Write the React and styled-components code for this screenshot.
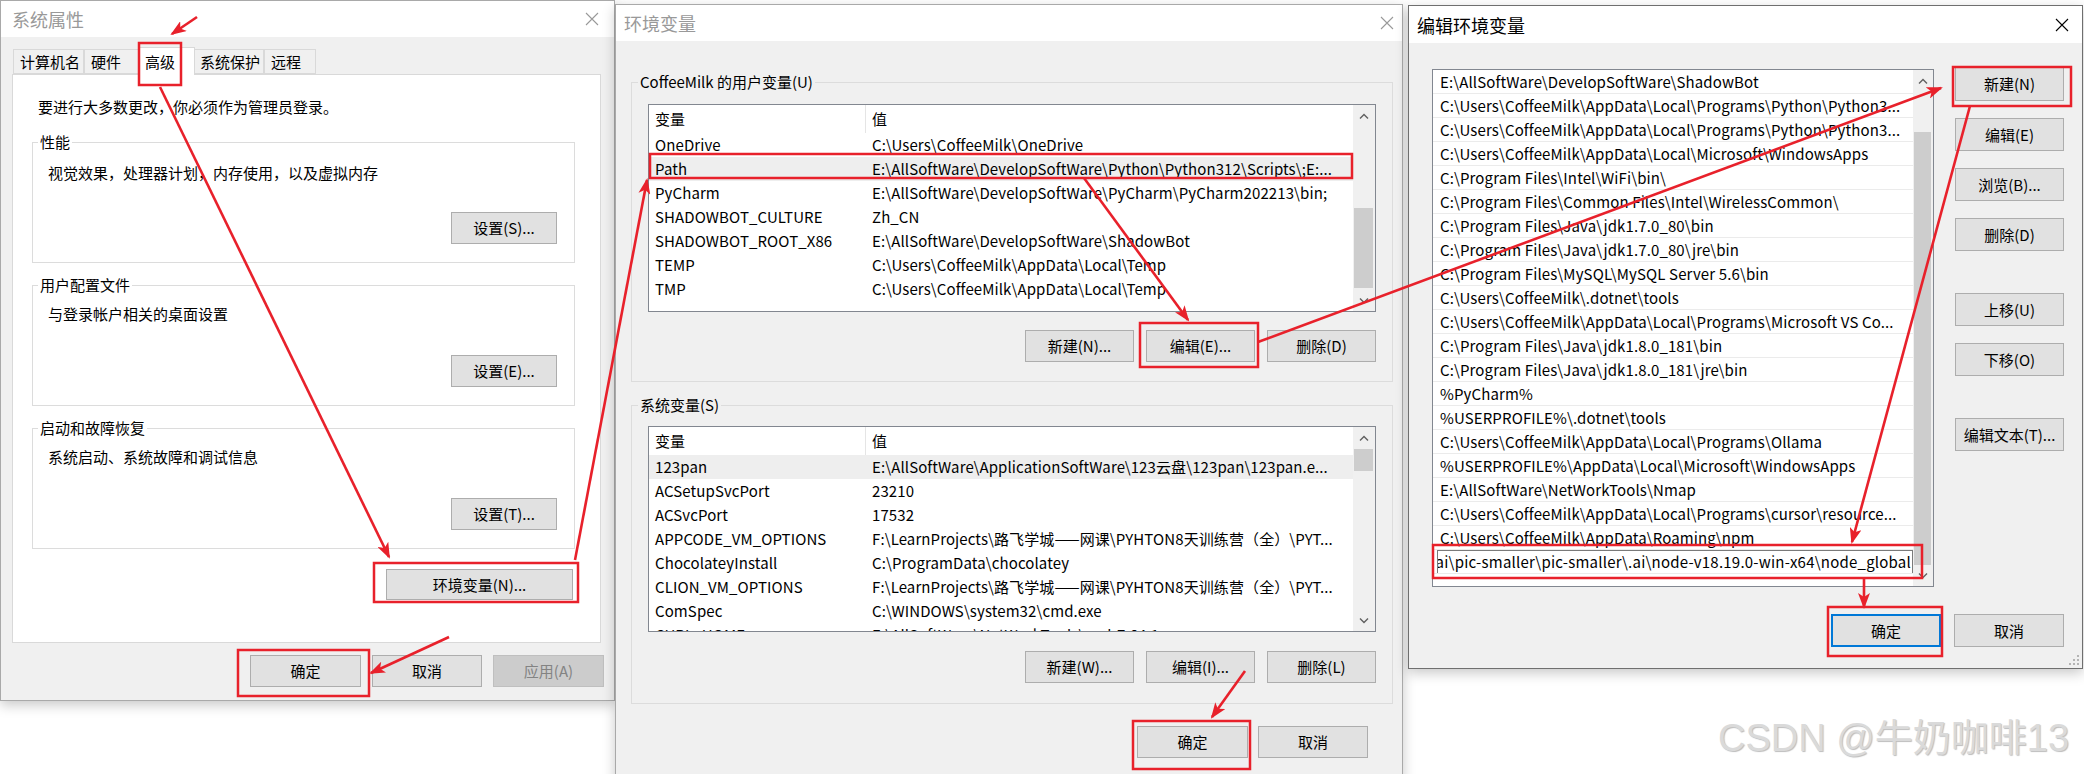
import React from "react";
import styled, { createGlobalStyle } from "styled-components";

const FONT = `"Noto Sans CJK SC", "Microsoft YaHei", sans-serif`;
const RED = "#e8212b";

const GlobalStyle = createGlobalStyle`
  html, body {
    margin: 0;
    padding: 0;
    background: #ffffff;
  }
  body {
    font-family: ${FONT};
    font-size: 15px;
    color: #000;
  }
  * {
    box-sizing: border-box;
  }
`;

const Stage = styled.div`
  position: relative;
  width: 2084px;
  height: 774px;
  overflow: hidden;
  display: flex;
  align-items: flex-start;
  background: #fff;
`;

const Dialog = styled.section`
  position: relative;
  flex: none;
  display: flex;
  flex-direction: column;
  width: ${(p) => p.$w}px;
  height: ${(p) => p.$h}px;
  margin-top: ${(p) => p.$top || 0}px;
  margin-left: ${(p) => p.$left || 0}px;
  background: #f0f0f0;
  border: 1px solid ${(p) => (p.$active ? "#6f6f6f" : "#a9a9a9")};
  box-shadow: 0 4px 12px rgba(0, 0, 0, 0.22);
`;

const TitleBar = styled.header`
  flex: none;
  height: ${(p) => p.$h}px;
  display: flex;
  align-items: center;
  justify-content: space-between;
  padding-left: ${(p) => p.$pl}px;
  background: #fff;
  color: ${(p) => (p.$active ? "#000" : "#999")};
  font-size: 18px;
  line-height: 24px;
`;

const CloseBox = styled.span`
  width: ${(p) => p.$w}px;
  height: 100%;
  display: flex;
  align-items: center;
  justify-content: center;
`;

const Body = styled.div`
  flex: 1;
  display: flex;
  flex-direction: column;
  align-items: ${(p) => p.$align || "stretch"};
  padding: ${(p) => p.$pad};
  min-height: 0;
`;

const Button = styled.div`
  flex: none;
  width: ${(p) => p.$w}px;
  height: ${(p) => p.$h || 32}px;
  margin-top: ${(p) => p.$mt || 0}px;
  display: flex;
  align-items: center;
  justify-content: center;
  background: ${(p) => (p.$disabled ? "#cccccc" : "#e1e1e1")};
  border: ${(p) => (p.$default ? "2px solid #0078d7" : p.$disabled ? "1px solid #bfbfbf" : "1px solid #adadad")};
  color: ${(p) => (p.$disabled ? "#838383" : "#000")};
  font-size: 15px;
  line-height: 20px;
  white-space: nowrap;
`;

const ButtonRow = styled.div`
  flex: none;
  display: flex;
  justify-content: flex-end;
  gap: ${(p) => p.$gap}px;
  margin-top: ${(p) => p.$mt || 0}px;
  margin-right: ${(p) => p.$mr || 0}px;
  align-self: stretch;
`;

/* ---------- dialog 1: 系统属性 ---------- */

const TabStrip = styled.div`
  flex: none;
  display: flex;
  align-items: flex-end;
  height: 27px;
  padding-left: 1px;
  position: relative;
  z-index: 1;
`;

const Tab = styled.div`
  flex: none;
  width: ${(p) => p.$w}px;
  height: ${(p) => (p.$sel ? 28 : 25)}px;
  margin: ${(p) => (p.$sel ? "0 -2px -1px" : "0")};
  padding-left: 6px;
  display: flex;
  align-items: center;
  background: ${(p) => (p.$sel ? "#fff" : "#f0f0f0")};
  border: 1px solid #d9d9d9;
  border-bottom: ${(p) => (p.$sel ? "none" : "1px solid #d9d9d9")};
  position: relative;
  z-index: ${(p) => (p.$sel ? 2 : 1)};
  font-size: 15px;
  line-height: 20px;
`;

const TabPanel = styled.div`
  flex: none;
  width: 589px;
  height: 569px;
  background: #fff;
  border: 1px solid #d9d9d9;
  padding: 22px 0 0 19px;
  display: flex;
  flex-direction: column;
  align-items: flex-start;
`;

const Line = styled.div`
  line-height: 20px;
  margin-left: ${(p) => p.$ml || 0}px;
  margin-top: ${(p) => p.$mt || 0}px;
  white-space: nowrap;
`;

const Group = styled.fieldset`
  flex: none;
  margin: ${(p) => p.$mt || 0}px 0 0;
  padding: 0;
  min-width: 0;
  width: ${(p) => (p.$w ? `${p.$w}px` : "auto")};
  border: 1px solid #dcdcdc;
`;

const Legend = styled.legend`
  margin-left: ${(p) => p.$ml}px;
  padding: 0 2px;
  font-size: 15px;
  line-height: 20px;
`;

const GroupInner = styled.div`
  display: flex;
  flex-direction: column;
  align-items: stretch;
  padding: ${(p) => p.$pad};
`;

/* ---------- list views ---------- */

const ListBox = styled.div`
  flex: none;
  display: flex;
  height: ${(p) => p.$h}px;
  width: ${(p) => (p.$w ? `${p.$w}px` : "auto")};
  margin-top: ${(p) => p.$mt || 0}px;
  background: #fff;
  border: 1px solid #828790;
  overflow: hidden;
`;

const ListMain = styled.div`
  flex: 1;
  min-width: 0;
  display: flex;
  flex-direction: column;
  overflow: hidden;
`;

const HeaderRow = styled.div`
  flex: none;
  display: flex;
  height: 28px;
`;

const HeaderCell = styled.div`
  flex: ${(p) => (p.$w ? "none" : 1)};
  width: ${(p) => (p.$w ? `${p.$w}px` : "auto")};
  display: flex;
  align-items: center;
  padding-left: 6px;
  border-right: ${(p) => (p.$w ? "1px solid #e5e5e5" : "none")};
  line-height: 20px;
`;

const VarRow = styled.div`
  flex: none;
  display: flex;
  align-items: center;
  height: 24px;
  background: ${(p) => (p.$sel ? "#eeeeee" : "transparent")};
  white-space: nowrap;
  line-height: 20px;
  letter-spacing: 0.1px;
`;

const VarName = styled.span`
  flex: none;
  width: 217px;
  padding-left: 6px;
  overflow: hidden;
`;

const VarValue = styled.span`
  flex: 1;
  padding-left: 6px;
  overflow: hidden;
`;

const ScrollBar = styled.div`
  flex: none;
  width: ${(p) => p.$w}px;
  display: flex;
  flex-direction: column;
  background: #f0f0f0;
`;

const ScrollArrow = styled.div`
  flex: none;
  height: 22px;
  display: flex;
  align-items: center;
  justify-content: center;
`;

const ScrollTrack = styled.div`
  flex: 1;
  min-height: 0;
`;

const ScrollThumb = styled.div`
  width: calc(100% - 3px);
  margin-left: 1px;
  margin-top: ${(p) => p.$top}px;
  height: ${(p) => p.$h}px;
  background: #cdcdcd;
`;

/* ---------- dialog 3 ---------- */

const EditArea = styled.div`
  flex: none;
  display: flex;
  gap: 21px;
`;

const PathList = styled.div`
  flex: 1;
  min-width: 0;
  display: flex;
  flex-direction: column;
  overflow: hidden;
`;

const PathRow = styled.div`
  flex: none;
  height: 24px;
  display: flex;
  align-items: center;
  padding-left: ${(p) => (p.$editing ? 4 : 7)}px;
  border-bottom: 1px solid #ebebeb;
  white-space: nowrap;
  overflow: hidden;
  line-height: 20px;
  letter-spacing: 0.12px;
`;

const PathInput = styled.div`
  flex: none;
  width: 476px;
  height: 24px;
  display: flex;
  align-items: center;
  justify-content: flex-end;
  border: 1px solid #7a7a7a;
  overflow: hidden;
  padding-right: 1px;
  letter-spacing: 0.22px;

  span {
    flex: none;
  }
`;

const SideButtons = styled.div`
  flex: none;
  display: flex;
  flex-direction: column;
  gap: 17px;
  width: 109px;
  margin-top: -1px;
`;

const Grip = styled.svg`
  position: absolute;
  right: 2px;
  bottom: 2px;
`;

const Overlay = styled.svg`
  position: absolute;
  left: 0;
  top: 0;
  pointer-events: none;
  z-index: 10;
`;

const Watermark = styled.div`
  position: absolute;
  left: 1718px;
  top: 714px;
  font-family: "Liberation Sans", "Noto Sans CJK SC", sans-serif;
  font-size: 38px;
  line-height: 48px;
  color: #dadada;
  text-shadow: 1px 1px 1px #bdbdbd;
  white-space: nowrap;
  z-index: 11;
`;

/* ---------- small drawings ---------- */

const CloseIcon = ({ color }) => (
  <svg width="14" height="14" viewBox="0 0 14 14">
    <path d="M1 1 L13 13 M13 1 L1 13" stroke={color} strokeWidth="1.1" fill="none" />
  </svg>
);

const Chevron = ({ down }) => (
  <svg width="10" height="7" viewBox="0 0 10 7">
    <path
      d={down ? "M1 1.5 L5 5.5 L9 1.5" : "M1 5.5 L5 1.5 L9 5.5"}
      stroke="#606060"
      strokeWidth="1.4"
      fill="none"
    />
  </svg>
);

const GripIcon = () => (
  <Grip width="12" height="12" viewBox="0 0 12 12">
    {[
      [9, 1],
      [5, 5],
      [9, 5],
      [1, 9],
      [5, 9],
      [9, 9],
    ].map(([x, y]) => (
      <rect key={`${x}-${y}`} x={x} y={y} width="2" height="2" fill="#b4b4b4" />
    ))}
  </Grip>
);

const Scroll = ({ w, top, h }) => (
  <ScrollBar $w={w}>
    <ScrollArrow>
      <Chevron />
    </ScrollArrow>
    <ScrollTrack>
      <ScrollThumb $top={top} $h={h} />
    </ScrollTrack>
    <ScrollArrow>
      <Chevron down />
    </ScrollArrow>
  </ScrollBar>
);

/* ---------- data ---------- */

const tabs = [
  { label: "计算机名", w: 71 },
  { label: "硬件", w: 56 },
  { label: "高级", w: 57, sel: true },
  { label: "系统保护", w: 71 },
  { label: "远程", w: 52 },
];

const sysGroups = [
  { title: "性能", desc: "视觉效果，处理器计划，内存使用，以及虚拟内存", btn: "设置(S)..." },
  { title: "用户配置文件", desc: "与登录帐户相关的桌面设置", btn: "设置(E)..." },
  { title: "启动和故障恢复", desc: "系统启动、系统故障和调试信息", btn: "设置(T)..." },
];

const userVars = [
  ["OneDrive", "C:\\Users\\CoffeeMilk\\OneDrive"],
  ["Path", "E:\\AllSoftWare\\DevelopSoftWare\\Python\\Python312\\Scripts\\;E:...", true],
  ["PyCharm", "E:\\AllSoftWare\\DevelopSoftWare\\PyCharm\\PyCharm202213\\bin;"],
  ["SHADOWBOT_CULTURE", "Zh_CN"],
  ["SHADOWBOT_ROOT_X86", "E:\\AllSoftWare\\DevelopSoftWare\\ShadowBot"],
  ["TEMP", "C:\\Users\\CoffeeMilk\\AppData\\Local\\Temp"],
  ["TMP", "C:\\Users\\CoffeeMilk\\AppData\\Local\\Temp"],
];

const systemVars = [
  ["123pan", "E:\\AllSoftWare\\ApplicationSoftWare\\123云盘\\123pan\\123pan.e...", true],
  ["ACSetupSvcPort", "23210"],
  ["ACSvcPort", "17532"],
  ["APPCODE_VM_OPTIONS", "F:\\LearnProjects\\路飞学城——网课\\PYHTON8天训练营（全）\\PYT..."],
  ["ChocolateyInstall", "C:\\ProgramData\\chocolatey"],
  ["CLION_VM_OPTIONS", "F:\\LearnProjects\\路飞学城——网课\\PYHTON8天训练营（全）\\PYT..."],
  ["ComSpec", "C:\\WINDOWS\\system32\\cmd.exe"],
  ["CURL_HOME", "E:\\AllSoftWare\\NetWorkTools\\curl-7.64.1"],
];

const paths = [
  "E:\\AllSoftWare\\DevelopSoftWare\\ShadowBot",
  "C:\\Users\\CoffeeMilk\\AppData\\Local\\Programs\\Python\\Python3...",
  "C:\\Users\\CoffeeMilk\\AppData\\Local\\Programs\\Python\\Python3...",
  "C:\\Users\\CoffeeMilk\\AppData\\Local\\Microsoft\\WindowsApps",
  "C:\\Program Files\\Intel\\WiFi\\bin\\",
  "C:\\Program Files\\Common Files\\Intel\\WirelessCommon\\",
  "C:\\Program Files\\Java\\jdk1.7.0_80\\bin",
  "C:\\Program Files\\Java\\jdk1.7.0_80\\jre\\bin",
  "C:\\Program Files\\MySQL\\MySQL Server 5.6\\bin",
  "C:\\Users\\CoffeeMilk\\.dotnet\\tools",
  "C:\\Users\\CoffeeMilk\\AppData\\Local\\Programs\\Microsoft VS Co...",
  "C:\\Program Files\\Java\\jdk1.8.0_181\\bin",
  "C:\\Program Files\\Java\\jdk1.8.0_181\\jre\\bin",
  "%PyCharm%",
  "%USERPROFILE%\\.dotnet\\tools",
  "C:\\Users\\CoffeeMilk\\AppData\\Local\\Programs\\Ollama",
  "%USERPROFILE%\\AppData\\Local\\Microsoft\\WindowsApps",
  "E:\\AllSoftWare\\NetWorkTools\\Nmap",
  "C:\\Users\\CoffeeMilk\\AppData\\Local\\Programs\\cursor\\resource...",
  "C:\\Users\\CoffeeMilk\\AppData\\Roaming\\npm",
];

const sideButtons = [
  { label: "新建(N)", h: 34 },
  { label: "编辑(E)" },
  { label: "浏览(B)..." },
  { label: "删除(D)" },
  { label: "上移(U)", mt: 25 },
  { label: "下移(O)" },
  { label: "编辑文本(T)...", mt: 25 },
];

const boxes = [
  [139, 43, 42, 42],
  [374, 563, 204, 39],
  [238, 650, 131, 46],
  [650, 154, 702, 24],
  [1140, 323, 118, 44],
  [1133, 721, 117, 48],
  [1953, 67, 118, 39],
  [1433, 545, 489, 33],
  [1828, 607, 114, 49],
];

const arrows = [
  [197, 17, 172, 34],
  [160, 87, 389, 557],
  [575, 560, 647, 180],
  [449, 637, 371, 673],
  [1084, 178, 1188, 320],
  [1258, 342, 1941, 88],
  [1970, 106, 1852, 542],
  [1864, 578, 1864, 607],
  [1245, 671, 1212, 717],
];

/* ---------- pieces ---------- */

const VarList = ({ rows, h, mt, thumbTop, thumbH }) => (
  <ListBox $h={h} $mt={mt}>
    <ListMain>
      <HeaderRow>
        <HeaderCell $w={217}>变量</HeaderCell>
        <HeaderCell>值</HeaderCell>
      </HeaderRow>
      {rows.map(([name, value, sel]) => (
        <VarRow key={name} $sel={sel}>
          <VarName>{name}</VarName>
          <VarValue>{value}</VarValue>
        </VarRow>
      ))}
    </ListMain>
    <Scroll w={22} top={thumbTop} h={thumbH} />
  </ListBox>
);

const SystemProperties = () => (
  <Dialog $w={615} $h={701}>
    <TitleBar $h={36} $pl={11}>
      系统属性
      <CloseBox $w={44}>
        <CloseIcon color="#999" />
      </CloseBox>
    </TitleBar>
    <Body $pad="10px 10px 0 11px" $align="flex-start">
      <TabStrip>
        {tabs.map((t) => (
          <Tab key={t.label} $w={t.w} $sel={t.sel}>
            {t.label}
          </Tab>
        ))}
      </TabStrip>
      <TabPanel>
        <Line $ml={6}>要进行大多数更改，你必须作为管理员登录。</Line>
        {sysGroups.map((g, i) => (
          <Group key={g.title} $w={543} $mt={i === 0 ? 15 : 12}>
            <Legend $ml={5}>{g.title}</Legend>
            <GroupInner $pad="0 17px 18px 14px">
              <Line $ml={1} $mt={i === 0 ? 11 : 9}>
                {g.desc}
              </Line>
              <ButtonRow $gap={0} $mt={i === 0 ? 29 : 31}>
                <Button $w={106}>{g.btn}</Button>
              </ButtonRow>
            </GroupInner>
          </Group>
        ))}
        <ButtonRow $gap={0} $mt={20} $mr={27}>
          <Button $w={187} $h={31}>
            环境变量(N)...
          </Button>
        </ButtonRow>
      </TabPanel>
      <ButtonRow $gap={11} $mt={12}>
        <Button $w={111}>确定</Button>
        <Button $w={110}>取消</Button>
        <Button $w={111} $disabled>
          应用(A)
        </Button>
      </ButtonRow>
    </Body>
  </Dialog>
);

const EnvironmentVariables = () => (
  <Dialog $w={788} $h={800} $top={4}>
    <TitleBar $h={36} $pl={8}>
      环境变量
      <CloseBox $w={30}>
        <CloseIcon color="#999" />
      </CloseBox>
    </TitleBar>
    <Body $pad="31px 9px 0 15px">
      <Group>
        <Legend $ml={6}>CoffeeMilk 的用户变量(U)</Legend>
        <GroupInner $pad="0 16px 19px 16px">
          <VarList rows={userVars} h={208} mt={12} thumbTop={81} thumbH={80} />
          <ButtonRow $gap={12} $mt={18}>
            <Button $w={109}>新建(N)...</Button>
            <Button $w={109}>编辑(E)...</Button>
            <Button $w={109}>删除(D)</Button>
          </ButtonRow>
        </GroupInner>
      </Group>
      <Group $mt={13}>
        <Legend $ml={6}>系统变量(S)</Legend>
        <GroupInner $pad="0 16px 20px 16px">
          <VarList rows={systemVars} h={206} mt={11} thumbTop={0} thumbH={22} />
          <ButtonRow $gap={12} $mt={19}>
            <Button $w={109}>新建(W)...</Button>
            <Button $w={109}>编辑(I)...</Button>
            <Button $w={109}>删除(L)</Button>
          </ButtonRow>
        </GroupInner>
      </Group>
      <ButtonRow $gap={10} $mt={22} $mr={25}>
        <Button $w={111}>确定</Button>
        <Button $w={110}>取消</Button>
      </ButtonRow>
    </Body>
    <GripIcon />
  </Dialog>
);

const EditVariable = () => (
  <Dialog $w={675} $h={664} $top={5} $left={5} $active>
    <TitleBar $h={37} $pl={8} $active>
      编辑环境变量
      <CloseBox $w={40}>
        <CloseIcon color="#000" />
      </CloseBox>
    </TitleBar>
    <Body $pad="25px 18px 0 23px">
      <EditArea>
        <ListBox $h={518} $mt={1}>
          <PathList>
            {paths.map((p, i) => (
              <PathRow key={`${p}-${i}`}>{p}</PathRow>
            ))}
            <PathRow $editing>
              <PathInput>
                <span>D:\AllSoftWare\.ai\pic-smaller\pic-smaller\.ai\node-v18.19.0-win-x64\node_global</span>
              </PathInput>
            </PathRow>
          </PathList>
          <Scroll w={20} top={40} h={433} />
        </ListBox>
        <SideButtons>
          {sideButtons.map((b) => (
            <Button key={b.label} $w={109} $h={b.h || 33} $mt={b.mt}>
              {b.label}
            </Button>
          ))}
        </SideButtons>
      </EditArea>
      <ButtonRow $gap={13} $mt={27}>
        <Button $w={110} $h={33} $default>
          确定
        </Button>
        <Button $w={110} $h={33}>
          取消
        </Button>
      </ButtonRow>
    </Body>
    <GripIcon />
  </Dialog>
);

const Annotations = () => (
  <Overlay width="2084" height="774" viewBox="0 0 2084 774">
    <defs>
      <marker
        id="head"
        markerUnits="userSpaceOnUse"
        markerWidth="16"
        markerHeight="12"
        refX="14"
        refY="6"
        orient="auto"
      >
        <path d="M0 0 L16 6 L0 12 L4 6 Z" fill={RED} />
      </marker>
    </defs>
    {boxes.map(([x, y, w, h]) => (
      <rect key={`${x}-${y}`} x={x} y={y} width={w} height={h} fill="none" stroke={RED} strokeWidth="2.5" />
    ))}
    {arrows.map(([x1, y1, x2, y2]) => (
      <line
        key={`${x1}-${y1}`}
        x1={x1}
        y1={y1}
        x2={x2}
        y2={y2}
        stroke={RED}
        strokeWidth="2.6"
        markerEnd="url(#head)"
      />
    ))}
  </Overlay>
);

const App = () => (
  <>
    <GlobalStyle />
    <Stage>
      <SystemProperties />
      <EnvironmentVariables />
      <EditVariable />
      <Annotations />
      <Watermark>CSDN @牛奶咖啡13</Watermark>
    </Stage>
  </>
);

export default App;
